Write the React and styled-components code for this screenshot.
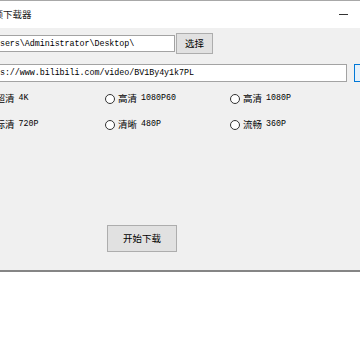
import React from "react";
import styled, { createGlobalStyle } from "styled-components";

const GlobalStyle = createGlobalStyle`
  html, body { margin: 0; padding: 0; background: #ffffff; }
  body { overflow: hidden; }
  #root { width: 360px; height: 360px; overflow: hidden; }
`;

const cjk = `"Noto Sans CJK SC", "Microsoft YaHei", sans-serif`;
const mono = `"Liberation Mono", "DejaVu Sans Mono", monospace`;

const Window = styled.div`
  margin-left: -35px;
  width: 466px;
  background: #f0f0f0;
  border-top: 1px solid #a8a8a8;
  border-bottom: 2px solid #858585;
  font-family: ${cjk};
  color: #000;
`;

const TitleBar = styled.div`
  height: 27px;
  background: #ffffff;
  display: flex;
  align-items: center;
  padding-left: 19px;
`;

const Title = styled.span`
  font-size: 9.5px;
  line-height: 1;
  color: #1a1a1a;
`;

const Controls = styled.div`
  margin-left: auto;
  display: flex;
  height: 100%;
`;

const CtrlButton = styled.div`
  width: 35px;
  height: 100%;
  display: flex;
  align-items: center;
  justify-content: center;
`;

const MinGlyph = styled.div`
  width: 9px;
  height: 1px;
  background: #333;
`;

const Body = styled.div`
  padding: 5px 0 18px 12px;
  display: flex;
  flex-direction: column;
`;

const Row = styled.div`
  display: flex;
  align-items: center;
  height: ${(p) => p.$h}px;
  margin-top: ${(p) => p.$mt || 0}px;
`;

const TextBox = styled.div`
  box-sizing: border-box;
  width: ${(p) => p.$w}px;
  height: ${(p) => p.$h}px;
  background: #ffffff;
  border: 1px solid #a3a3a3;
  display: flex;
  align-items: center;
  padding-left: 2px;
  font-family: ${mono};
  font-size: 8.4px;
  letter-spacing: -0.05px;
  white-space: nowrap;
  overflow: hidden;
`;

const Button = styled.div`
  box-sizing: border-box;
  width: ${(p) => p.$w}px;
  height: ${(p) => p.$h}px;
  margin-left: ${(p) => p.$ml || 0}px;
  background: ${(p) => (p.$focus ? "#e5f1fb" : "#e1e1e1")};
  border: 1px solid ${(p) => (p.$focus ? "#0078d7" : "#adadad")};
  display: flex;
  align-items: center;
  justify-content: center;
  font-size: 9.5px;
  line-height: 1;
  flex-shrink: 0;
`;

const RadioGrid = styled.div`
  display: grid;
  grid-template-columns: 122.5px 125px auto;
  grid-auto-rows: 26px;
  margin-top: 3.5px;
  margin-left: 5.5px;
`;

const RadioItem = styled.div`
  display: flex;
  align-items: center;
`;

const Circle = styled.span`
  box-sizing: border-box;
  width: 10px;
  height: 10px;
  border-radius: 50%;
  border: 1px solid #333;
  background: #fff;
  margin-right: 3px;
  flex-shrink: 0;
`;

const Quality = styled.span`
  font-size: 9.5px;
  line-height: 1;
`;

const Res = styled.span`
  font-family: ${mono};
  font-size: 8.3px;
  margin-left: 4px;
  line-height: 1;
`;

const StartWrap = styled.div`
  margin-top: 87.5px;
  margin-left: 130px;
`;

const options = [
  ["超清", "4K"],
  ["高清", "1080P60"],
  ["高清", "1080P"],
  ["标清", "720P"],
  ["清晰", "480P"],
  ["流畅", "360P"],
];

export default function App() {
  return (
    <>
      <GlobalStyle />
      <Window>
        <TitleBar>
          <Title>视频下载器</Title>
          <Controls>
            <CtrlButton>
              <MinGlyph />
            </CtrlButton>
            <CtrlButton />
            <CtrlButton />
          </Controls>
        </TitleBar>
        <Body>
          <Row $h={21}>
            <TextBox $w={198} $h={17}>C:\Users\Administrator\Desktop\</TextBox>
            <Button $w={37} $h={21} $ml={1}>选择</Button>
          </Row>
          <Row $h={18} $mt={10}>
            <TextBox $w={370} $h={18}>https://www.bilibili.com/video/BV1By4y1k7PL</TextBox>
            <Button $w={40} $h={18} $ml={7} $focus>解析</Button>
          </Row>
          <RadioGrid>
            {options.map(([q, r], i) => (
              <RadioItem key={i}>
                <Circle />
                <Quality>{q}</Quality>
                <Res>{r}</Res>
              </RadioItem>
            ))}
          </RadioGrid>
          <StartWrap>
            <Button $w={70} $h={27}>开始下载</Button>
          </StartWrap>
        </Body>
      </Window>
    </>
  );
}
